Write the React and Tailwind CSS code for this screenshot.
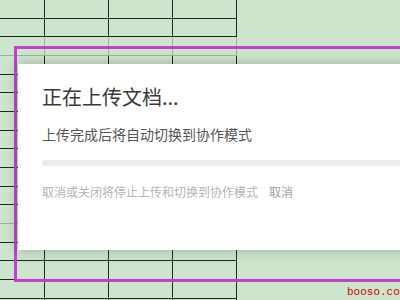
const ROWS = Array.from({ length: 17 }, (_, i) => i);

function SheetRow({ index }) {
  // rows 2 and 11 carry the lighter grey divider
  const line = index === 2 || index === 11 ? "border-[#9fb09f]" : "border-[#1e2a1e]";
  return (
    <div className="flex h-[18.67px]">
      <div className={`w-[45px] border-b border-r ${line}`} />
      <div className={`w-[64px] border-b border-r ${line}`} />
      <div className={`w-[64px] border-b border-r ${line}`} />
      <div className={`w-[64px] border-b border-r ${line}`} />
      <div className="flex-1" />
    </div>
  );
}

export default function App() {
  return (
    <div
      className="relative w-[400px] h-[300px] overflow-hidden bg-[#cde5cd]"
      style={{ fontFamily: '"Noto Sans CJK SC", "Noto Sans", sans-serif' }}
    >
      {/* spreadsheet behind the dialog */}
      <div className="flex flex-col">
        {ROWS.map((i) => (
          <SheetRow key={i} index={i} />
        ))}
      </div>

      {/* selection frame */}
      <div className="absolute left-[14px] top-[46px] w-[400px] h-[236px] border-[3px] border-[#c23fd2]" />

      {/* upload dialog */}
      <div className="absolute left-[18px] top-[64px] w-[400px] h-[186px] bg-white shadow-[0_0_12px_rgba(60,70,60,0.35)] pl-6 pt-[23px] flex flex-col">
        <h2 className="text-[20px] leading-[20px] text-[#3a3a3a] font-normal">正在上传文档...</h2>
        <p className="mt-5 text-[14px] leading-[14px] text-[#555]">上传完成后将自动切换到协作模式</p>
        <div className="mt-[19px] h-[6px] rounded-full bg-[#ebebeb]" />
        <div className="mt-5 flex gap-[11px] text-[12px] leading-[12px] text-[#b3b3b3]">
          <span>取消或关闭将停止上传和切换到协作模式</span>
          <span className="text-[#a0a0a0]">取消</span>
        </div>
      </div>

      {/* watermark, clipped by the right edge as in the source */}
      <div className="absolute left-[347px] top-[287px] text-[11px] leading-[11px] text-[#d40000] font-['Liberation_Mono',monospace]">
        booso.com
      </div>
    </div>
  );
}
